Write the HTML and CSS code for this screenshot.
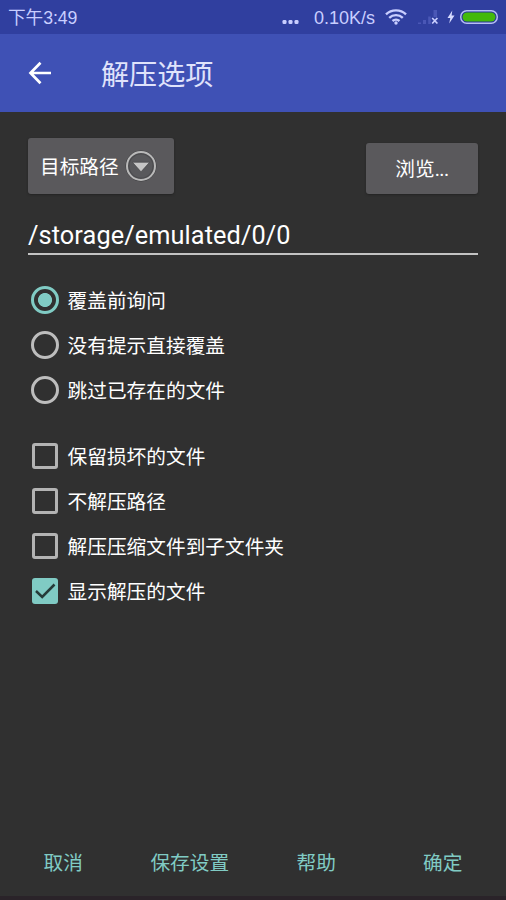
FILE: index.html
```html
<!DOCTYPE html>
<html lang="zh-CN">
<head>
<meta charset="utf-8">
<title>解压选项</title>
<link rel="stylesheet" href="styles.css">
</head>
<body>
<div class="screen">
  <div class="status">
    <span class="time">下午3:49</span>
    <span class="right">
      <svg class="dots" width="18" height="6" viewBox="0 0 18 6" fill="#c9ceff"><rect x="0.5" y="1" width="4" height="4" rx="1.300"/><rect x="6.500" y="1" width="4" height="4" rx="1.300"/><rect x="12.500" y="1" width="4" height="4" rx="1.300"/></svg>
      <span class="speed">0.10K/s</span>
      <svg class="wifi" width="22" height="16" viewBox="0 0 22 16" fill="none" stroke="#c9ceff" stroke-width="2.400"><path d="M1 5.300C6.500.1 15.500.1 21 5.300M4.200 8.800C8 5.200 14 5.200 17.800 8.800M7.500 12C9.500 10.200 12.500 10.200 14.500 12"/><circle cx="11" cy="14" r="1.700" fill="#c9ceff" stroke="none"/></svg>
      <svg class="signal" width="21" height="16" viewBox="0 0 21 16"><path d="M0 15v-1.500h3v1.500zM5 15v-4h3v4zM10.200 15v-7.500h2.600v7.500zM15.500 8v-7h3.500v7z" fill="#4a57b6"/><path d="M14.200 9l5.200 5.500m0-5.500l-5.200 5.500" stroke="#c9ceff" stroke-width="1.700"/></svg>
      <svg class="bolt" width="8" height="14" viewBox="0 0 8 14" fill="#d7dbff"><path d="M5.300.500L.500 8h2.800L2.200 13.500 7.500 5.500H4.600z"/></svg>
      <svg width="38" height="14" viewBox="0 0 38 14"><rect x=".75" y=".75" width="36.500" height="12.500" rx="6" fill="#26339a" stroke="#b7bff5" stroke-width="1.500"/><rect x="2.500" y="2.500" width="33" height="9" rx="4.500" fill="#43b90b"/></svg>
    </span>
  </div>
  <header class="bar">
    <svg class="back" width="24" height="24" viewBox="0 0 24 24" fill="none" stroke="#fff" stroke-width="2.700"><path d="M12.500 1.700L2.500 12l10 10.300M2.500 12H23"/></svg>
    <h1>解压选项</h1>
  </header>
  <main>
    <div class="top">
      <button class="btn path"><span class="label">目标路径</span>
        <svg width="32" height="32" viewBox="0 0 32 32"><circle cx="16" cy="16" r="15.200" fill="none" stroke="#444446" stroke-width="1"/><circle cx="16" cy="16" r="14" fill="#4c4c4f" stroke="#b9b9b9" stroke-width="2"/><circle cx="16" cy="16" r="11.500" fill="#59595c"/><path d="M7.500 12.300h17L16 21.800z" fill="#c6c6c6" stroke="#404042" stroke-width=".6"/></svg>
      </button>
      <button class="btn browse"><span class="label">浏览<span class="ellipsis">...</span></span></button>
    </div>
    <div class="field">/storage/emulated/0/0</div>
    <div class="group radios">
      <label class="row"><span class="radio on"></span><span class="text">覆盖前询问</span></label>
      <label class="row"><span class="radio"></span><span class="text">没有提示直接覆盖</span></label>
      <label class="row"><span class="radio"></span><span class="text">跳过已存在的文件</span></label>
    </div>
    <div class="group checks">
      <label class="row"><span class="check"></span><span class="text">保留损坏的文件</span></label>
      <label class="row"><span class="check"></span><span class="text">不解压路径</span></label>
      <label class="row"><span class="check"></span><span class="text">解压压缩文件到子文件夹</span></label>
      <label class="row"><span class="check on"><svg width="26" height="26" viewBox="0 0 26 26" fill="none" stroke="#263b39" stroke-width="2.500"><path d="M4 13l6.200 6L22.500 6.500"/></svg></span><span class="text">显示解压的文件</span></label>
    </div>
  </main>
  <footer><span>取消</span><span>保存设置</span><span>帮助</span><span>确定</span></footer>
</div>
</body>
</html>
```
FILE: styles.css
```css
* { box-sizing: border-box; }
body { margin: 0; background: #303030; }
.screen {
  width: 506px; height: 900px;
  display: flex; flex-direction: column;
  background: #303030; color: #fff;
  font-family: Roboto, "Noto Sans CJK SC", sans-serif;
  font-size: 19.68px;
  overflow: hidden;
}
.status {
  height: 34px; flex: none;
  display: flex; justify-content: space-between; align-items: center;
  padding: 0 8px 0 8px;
  background: #303f9f; color: #c9ceff;
  font-family: "Liberation Sans", "Noto Sans CJK SC", sans-serif;
  font-size: 18px; line-height: 34px;
}
.time { font-size: 17.7px; padding-top: 2px; letter-spacing: -0.1px; }
.right { display: flex; align-items: center; }
.dots { margin: 10px 14px 0 0; }
.speed { width: 62px; margin-right: 9px; padding-top: 2px; white-space: nowrap; }
.wifi { margin-right: 11px; }
.signal { margin-right: 8px; }
.bolt { margin-right: 5px; }
.bar {
  height: 78px; flex: none;
  display: flex; align-items: center;
  padding-left: 28px;
  background: #3f51b5;
}
h1 { margin: 0 0 0 49px; padding-top: 5px; font-size: 28.1px; font-weight: 400; line-height: 40px; color: #e0e3fb; }
main { flex: 1; padding: 26px 28px 0; }
.top { display: flex; justify-content: space-between; align-items: flex-end; height: 56px; }
.btn {
  display: flex; align-items: center; justify-content: center;
  border: 0; border-radius: 3px; padding: 0;
  background: #5a595c; color: #fff;
  font: inherit;
  box-shadow: 0 1px 2px #242424;
}
.path { width: 146px; height: 56px; justify-content: flex-start; padding-left: 12px; gap: 6px; }
.browse { width: 112px; height: 51px; }
.label { padding-bottom: 2px; }
.ellipsis { letter-spacing: -0.5px; }
.field {
  height: 61px; padding-top: 24px;
  border-bottom: 2px solid #c3c3c3;
  font-size: 25.3px; line-height: 35px; letter-spacing: 0.1px;
}
.group { display: flex; flex-direction: column; }
.radios { margin-top: 22px; }
.checks { margin-top: 21px; }
.row { height: 45px; display: flex; align-items: center; line-height: 30px; }
.text { padding-top: 4px; }
.radio {
  width: 28px; height: 28px; margin: 0 8.6px 0 3px;
  border: 3px solid #bdbdbd; border-radius: 50%;
}
.radio.on { border-color: #80cbc4; background: radial-gradient(circle, #80cbc4 6.6px, transparent 7.4px); }
.check {
  width: 26px; height: 26px; margin: 0 9.6px 0 4px;
  border: 3px solid #b3b3b3; border-radius: 3px;
}
.check.on { border: 0; background: #80cbc4; }
.check svg { display: block; }
footer {
  height: 72px; flex: none; display: flex;
  border-bottom: 4px solid #2a2329;
  color: #80cbc4; line-height: 72px;
}
footer span { flex: 1 1 0; text-align: center; }
```
